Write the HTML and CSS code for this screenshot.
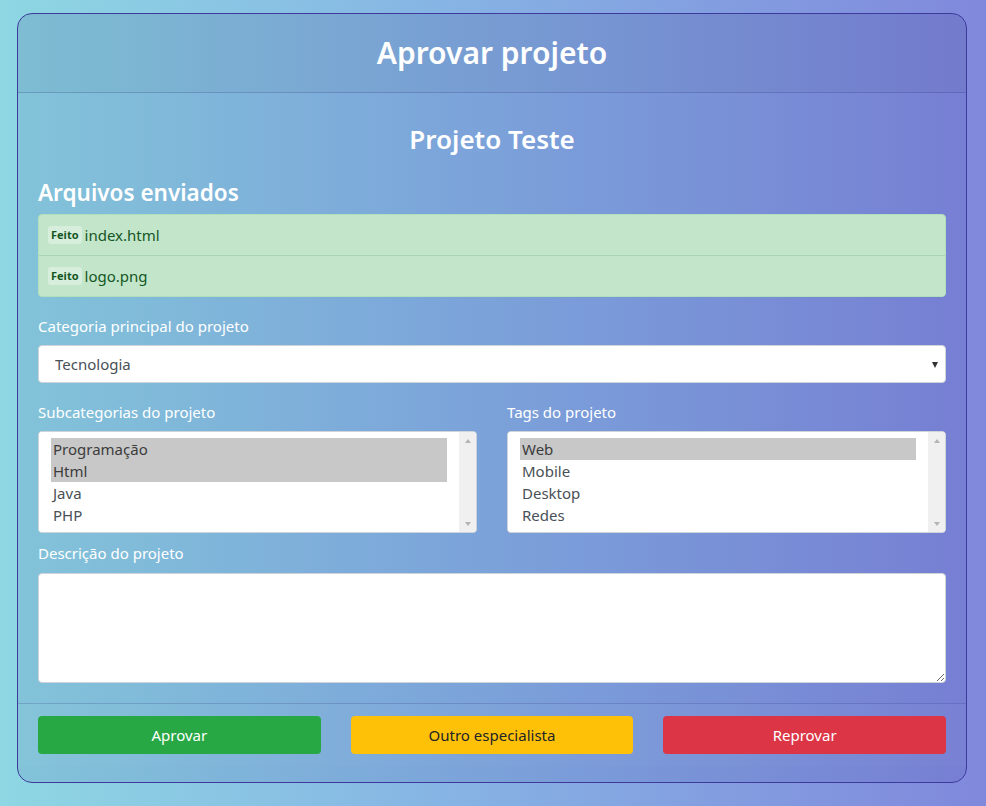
FILE: index.html
```html
<!DOCTYPE html>
<html lang="pt-BR">
<head>
<meta charset="utf-8">
<title>Aprovar projeto</title>
<link rel="stylesheet" href="styles.css">
</head>
<body>
<div class="page">
  <form class="card">
    <header class="card-header">
      <h1 class="card-title">Aprovar projeto</h1>
    </header>
    <div class="card-body">
      <h2 class="project-name">Projeto Teste</h2>
      <h3 class="section-title">Arquivos enviados</h3>
      <ul class="file-list">
        <li class="file-item"><span class="badge">Feito</span> index.html</li>
        <li class="file-item"><span class="badge">Feito</span> logo.png</li>
      </ul>

      <div class="field field-category">
        <label class="field-label" for="categoria">Categoria principal do projeto</label>
        <div class="select-wrap">
          <select id="categoria" class="control select">
            <option>Tecnologia</option>
            <option>Design</option>
            <option>Marketing</option>
          </select>
        </div>
      </div>

      <div class="field-row">
        <div class="field">
          <label class="field-label" for="subcategorias">Subcategorias do projeto</label>
          <div class="listbox-frame">
            <select id="subcategorias" class="listbox" multiple size="4">
              <option selected>Programação</option>
              <option selected>Html</option>
              <option>Java</option>
              <option>PHP</option>
            </select>
            <div class="scrollbar" aria-hidden="true"><span class="sb-btn sb-up"></span><span class="sb-btn sb-down"></span></div>
          </div>
        </div>
        <div class="field">
          <label class="field-label" for="tags">Tags do projeto</label>
          <div class="listbox-frame">
            <select id="tags" class="listbox" multiple size="4">
              <option selected>Web</option>
              <option>Mobile</option>
              <option>Desktop</option>
              <option>Redes</option>
            </select>
            <div class="scrollbar" aria-hidden="true"><span class="sb-btn sb-up"></span><span class="sb-btn sb-down"></span></div>
          </div>
        </div>
      </div>

      <div class="field field-last">
        <label class="field-label" for="descricao">Descrição do projeto</label>
        <textarea id="descricao" class="control textarea"></textarea>
      </div>
    </div>
    <footer class="card-footer">
      <button type="button" class="btn btn-success">Aprovar</button>
      <button type="button" class="btn btn-warning">Outro especialista</button>
      <button type="button" class="btn btn-danger">Reprovar</button>
    </footer>
  </form>
</div>
</body>
</html>
```
FILE: styles.css
```css
* {
  box-sizing: border-box;
}

html, body {
  margin: 0;
  min-height: 100%;
}

body {
  font-family: "Noto Sans", "Open Sans", sans-serif;
  font-size: 15px;
  line-height: 1.5;
  color: #212529;
  background: linear-gradient(to right, #8ed7e3 0%, #86b4e4 45%, #8088dc 100%);
  min-height: 806px;
}

.page {
  padding: 13px 19px 24px 17px;
}

.card {
  display: flex;
  flex-direction: column;
  border: 1px solid #3e3a9c;
  border-radius: 15px;
  background: rgba(40, 40, 140, 0.1);
  padding-bottom: 16px;
  overflow: hidden;
}

.card-header {
  padding: 20px;
  background: rgba(0, 0, 0, 0.03);
  border-bottom: 1px solid rgba(40, 40, 120, 0.22);
  text-align: center;
}

.card-title {
  margin: 0;
  font-size: 30px;
  line-height: 38px;
  font-weight: 600;
  color: #fff;
}

.card-body {
  padding: 20px 20px 20px;
}

.project-name {
  margin: 11px 0 25px;
  text-align: center;
  font-size: 26px;
  line-height: 31px;
  font-weight: 600;
  color: #fff;
}

.section-title {
  margin: 0 0 8px;
  font-size: 22.5px;
  line-height: 26px;
  font-weight: 600;
  color: #fff;
}

.file-list {
  list-style: none;
  margin: 0 0 18px;
  padding: 0;
  border: 1px solid #b1dfbb;
  border-radius: 4px;
  background: #c3e6cb;
  overflow: hidden;
}

.file-item {
  display: flex;
  align-items: center;
  gap: 3px;
  padding: 9px 9px;
  line-height: 22px;
  color: #155724;
  font-size: 15px;
}

.file-item + .file-item {
  border-top: 1px solid #a9d3b3;
}

.badge {
  display: inline-block;
  padding: 2px 3px;
  border-radius: 3px;
  background: rgba(255, 255, 255, 0.32);
  font-size: 11px;
  line-height: 14px;
  font-weight: 700;
  color: #155724;
}

.field {
  display: flex;
  flex-direction: column;
  margin-bottom: 17px;
}

.field-category {
  margin-bottom: 18px;
}

.field-label {
  margin-bottom: 8px;
  color: #fff;
  font-size: 15px;
  line-height: 22px;
}

.field-row {
  display: grid;
  grid-template-columns: 1fr 1fr;
  column-gap: 30px;
}

.field-row .field {
  margin-bottom: 9px;
}

.field-last {
  margin-bottom: 0;
}

.field-last .field-label {
  margin-bottom: 9px;
}

.control {
  display: block;
  width: 100%;
  font-family: inherit;
  font-size: 15px;
  color: #495057;
  background: #fff;
  border: 1px solid #ced4da;
  border-radius: 4px;
  margin: 0;
}

.select-wrap {
  position: relative;
}

.select-wrap::after {
  content: "";
  position: absolute;
  right: 8px;
  top: 17px;
  border-left: 3.5px solid transparent;
  border-right: 3.5px solid transparent;
  border-top: 6px solid #333;
  pointer-events: none;
}

.select {
  -webkit-appearance: none;
  appearance: none;
  height: 38px;
  padding: 0 16px;
  line-height: 36px;
}

.listbox-frame {
  display: flex;
  height: 102px;
  background: #fff;
  border: 1px solid #ced4da;
  border-radius: 4px;
  overflow: hidden;
}

.listbox {
  flex: 1;
  min-width: 0;
  height: 100%;
  margin: 0;
  padding: 6px 12px;
  border: 0;
  outline: none;
  overflow: hidden;
  background: #fff;
  font-family: inherit;
  font-size: 15px;
  color: #495057;
}

.listbox option {
  padding: 1px 2px 0;
  height: 22px;
  line-height: 21px;
  font-size: 15px;
}

.listbox option:checked {
  background: #c8c8c8;
  color: #3c3c3c;
}

.scrollbar {
  flex: 0 0 17px;
  display: flex;
  flex-direction: column;
  justify-content: space-between;
  background: #f0f0f0;
}

.sb-btn {
  display: flex;
  align-items: center;
  justify-content: center;
  height: 17px;
}

.sb-btn::before {
  content: "";
  border-left: 3.5px solid transparent;
  border-right: 3.5px solid transparent;
}

.sb-up::before {
  border-bottom: 4px solid #b4b4b4;
}

.sb-down::before {
  border-top: 4px solid #b4b4b4;
}

.textarea {
  height: 110px;
  padding: 6px 12px;
  resize: both;
}

.card-footer {
  display: grid;
  grid-template-columns: 1fr 1fr 1fr;
  column-gap: 30px;
  padding: 12px 20px;
  background: rgba(255, 255, 255, 0.02);
  border-top: 1px solid rgba(40, 40, 120, 0.2);
}

.btn {
  height: 38px;
  border: 1px solid transparent;
  border-radius: 4px;
  font-family: inherit;
  font-size: 15px;
  line-height: 1.5;
  cursor: pointer;
}

.btn-success {
  background: #28a745;
  color: #fff;
}

.btn-warning {
  background: #ffc107;
  color: #212529;
}

.btn-danger {
  background: #dc3545;
  color: #fff;
}
```
